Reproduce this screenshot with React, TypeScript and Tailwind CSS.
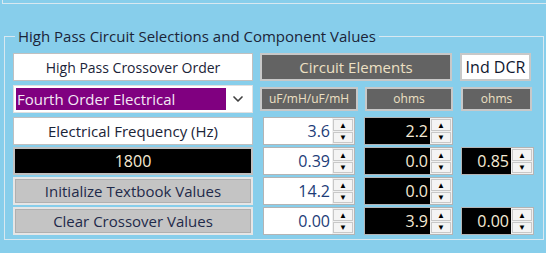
import { ChevronDown } from 'lucide-react'

const font = 'font-["Segoe_UI","Open_Sans",sans-serif]'

function Spin() {
  return (
    <div className="flex w-[22px] flex-col gap-px bg-[#f0f0f0] p-px">
      <div className="flex flex-1 items-center justify-center border border-[#c8c8c8] bg-[#f4f4f4] text-[8px] leading-none text-black">▲</div>
      <div className="flex flex-1 items-center justify-center border border-[#c8c8c8] bg-[#f4f4f4] text-[8px] leading-none text-black">▼</div>
    </div>
  )
}

function NumBox({ value, dark, width }: { value: string; dark?: boolean; width: string }) {
  return (
    <div className={`flex h-full border border-[#b4b4b4] bg-[#f0f0f0] ${width}`}>
      <div
        className={`flex flex-1 items-center justify-end pr-[2px] text-[16px] ${
          dark ? 'bg-black text-[#f6ead4]' : 'bg-white text-[#1d3c78]'
        }`}
      >
        {value}
      </div>
      <Spin />
    </div>
  )
}

function Label({ children, className = '' }: { children: React.ReactNode; className?: string }) {
  return (
    <div className={`flex h-full items-center justify-center border border-[#c0c0c0] ${className}`}>
      {children}
    </div>
  )
}

const rows = [
  { left: 'freq', a: '3.6', b: '2.2', c: null },
  { left: 'hz', a: '0.39', b: '0.0', c: '0.85' },
  { left: 'init', a: '14.2', b: '0.0', c: null },
  { left: 'clear', a: '0.00', b: '3.9', c: '0.00' },
]

function LeftCell({ kind }: { kind: string }) {
  if (kind === 'freq')
    return <Label className="bg-white text-[15px] text-[#1b2438]">Electrical Frequency (Hz)</Label>
  if (kind === 'hz')
    return <Label className="border-2 border-[#a8a8a8] bg-black text-[16px] text-[#f6ead4]">1800</Label>
  return (
    <div className="h-full border-2 border-[#e6e6e6] bg-[#c4c4c4]">
      <div className="flex h-full items-center justify-center border border-[#b0b0b0] text-[15px] text-[#1f2a4a]">
        {kind === 'init' ? 'Initialize Textbook Values' : 'Clear Crossover Values'}
      </div>
    </div>
  )
}

export default function App() {
  return (
    <div className={`h-[253px] w-[546px] overflow-hidden bg-[#87ceeb] ${font}`}>
      <div className="ml-[2px] h-[4px] border-b border-l border-[#d8e8f0]" />
      <fieldset className="ml-[4px] mt-[22px] h-[214px] w-[540px] border border-[#d8e8f0] pl-[8px] pt-[7px]">
        <legend className="ml-[2px] px-[3px] text-[15px] leading-[20px] text-[#1b2438]">
          High Pass Circuit Selections and Component Values
        </legend>

        <div className="flex h-[28px] gap-[7px]">
          <Label className="w-[240px] bg-white text-[14px] text-[#1b2438]">High Pass Crossover Order</Label>
          <Label className="w-[192px] border-2 border-[#c8c8c8] bg-[#636363] text-[15px] text-[#ede0c4]">Circuit Elements</Label>
          <Label className="ml-[1px] w-[71px] border-2 border-[#c8c8c8] bg-white text-[16px] text-[#101830]">Ind DCR</Label>
        </div>

        <div className="mt-[4px] flex h-[28px] gap-[7px]">
          <div className="flex w-[240px] items-center border border-[#e0e0e0] bg-white pl-[2px] pr-[6px]">
            <div className="flex h-[22px] w-[210px] items-center bg-[#800080] pl-[1px] text-[15px] text-[#f4e8f4]">
              Fourth Order Electrical
            </div>
            <ChevronDown className="ml-auto h-[16px] w-[16px] text-[#404040]" strokeWidth={2.5} />
          </div>
          <div className="flex h-full items-center gap-[7px] py-[2px]">
            <Label className="w-[98px] border-2 border-[#c8c8c8] bg-[#636363] text-[12px] text-[#ede0c4]">uF/mH/uF/mH</Label>
            <Label className="w-[88px] border-2 border-[#c8c8c8] bg-[#636363] text-[12px] text-[#ede0c4]">ohms</Label>
            <Label className="ml-[1px] w-[71px] border-2 border-[#c8c8c8] bg-[#636363] text-[12px] text-[#ede0c4]">ohms</Label>
          </div>
        </div>

        <div className="mt-[4px] flex flex-col gap-[2px]">
          {rows.map((r) => (
            <div key={r.left} className="flex h-[28px]">
              <div className="w-[240px]">
                <LeftCell kind={r.left} />
              </div>
              <div className="ml-[10px]">
                <NumBox value={r.a} width="w-[92px]" />
              </div>
              <div className="ml-[9px]">
                <NumBox value={r.b} dark width="w-[89px]" />
              </div>
              {r.c && (
                <div className="ml-[8px]">
                  <NumBox value={r.c} dark width="w-[73px]" />
                </div>
              )}
            </div>
          ))}
        </div>
      </fieldset>
    </div>
  )
}
